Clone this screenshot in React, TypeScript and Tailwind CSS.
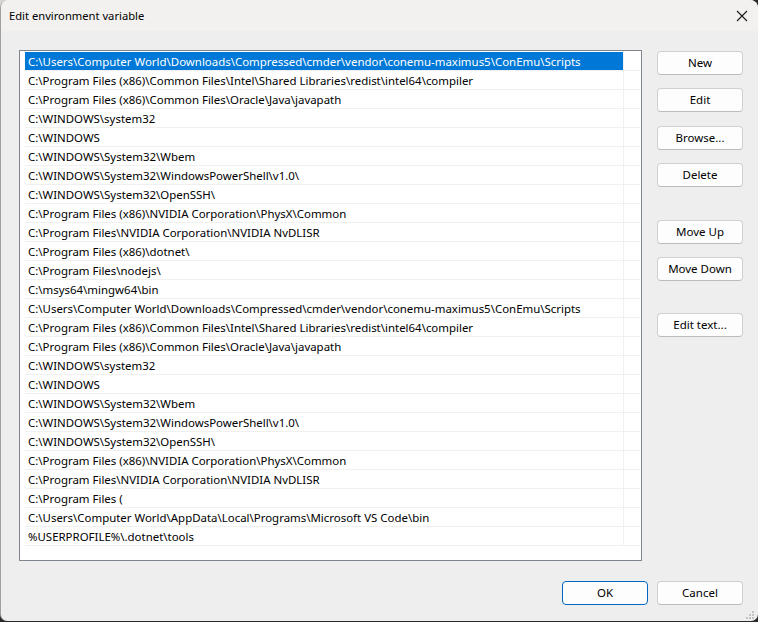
import React from 'react';

const paths = [
    "C:\\Users\\Computer World\\Downloads\\Compressed\\cmder\\vendor\\conemu-maximus5\\ConEmu\\Scripts",
    "C:\\Program Files (x86)\\Common Files\\Intel\\Shared Libraries\\redist\\intel64\\compiler",
    "C:\\Program Files (x86)\\Common Files\\Oracle\\Java\\javapath",
    "C:\\WINDOWS\\system32",
    "C:\\WINDOWS",
    "C:\\WINDOWS\\System32\\Wbem",
    "C:\\WINDOWS\\System32\\WindowsPowerShell\\v1.0\\",
    "C:\\WINDOWS\\System32\\OpenSSH\\",
    "C:\\Program Files (x86)\\NVIDIA Corporation\\PhysX\\Common",
    "C:\\Program Files\\NVIDIA Corporation\\NVIDIA NvDLISR",
    "C:\\Program Files (x86)\\dotnet\\",
    "C:\\Program Files\\nodejs\\",
    "C:\\msys64\\mingw64\\bin",
    "C:\\Users\\Computer World\\Downloads\\Compressed\\cmder\\vendor\\conemu-maximus5\\ConEmu\\Scripts",
    "C:\\Program Files (x86)\\Common Files\\Intel\\Shared Libraries\\redist\\intel64\\compiler",
    "C:\\Program Files (x86)\\Common Files\\Oracle\\Java\\javapath",
    "C:\\WINDOWS\\system32",
    "C:\\WINDOWS",
    "C:\\WINDOWS\\System32\\Wbem",
    "C:\\WINDOWS\\System32\\WindowsPowerShell\\v1.0\\",
    "C:\\WINDOWS\\System32\\OpenSSH\\",
    "C:\\Program Files (x86)\\NVIDIA Corporation\\PhysX\\Common",
    "C:\\Program Files\\NVIDIA Corporation\\NVIDIA NvDLISR",
    "C:\\Program Files (",
    "C:\\Users\\Computer World\\AppData\\Local\\Programs\\Microsoft VS Code\\bin",
    "%USERPROFILE%\\.dotnet\\tools",
];

function Btn({ label, primary, className = '' }: { label: string; primary?: boolean; className?: string }) {
    return (
        <button
            className={`w-[86px] h-[24px] rounded-[4px] bg-[#fdfdfd] text-[11.5px] leading-none text-black border ${
                primary ? 'border-[#0067c0]' : 'border-[#d0d0d0] border-b-[#bcbcbc]'
            } ${className}`}
        >
            {label}
        </button>
    );
}

export default function App() {
    return (
        <div className="relative w-[758px] h-[622px] bg-[radial-gradient(circle_at_top_left,#d8d5cf_40px,#2a2a2a_41px)] overflow-hidden font-['Noto_Sans','Open_Sans',sans-serif]">
            <div className="w-full h-[621px] rounded-t-[8px] rounded-b-[7px] bg-[#eeeeee] flex flex-col overflow-hidden border-l border-[#a0a0a0]">
                <div className="h-[31px] shrink-0 bg-[#f3f1ef] flex items-center justify-between pl-[8px] pr-[8px] pt-px">
                    <span className="text-[11.2px] text-black">Edit environment variable</span>
                    <svg width="12" height="12" viewBox="0 0 12 12" className="mr-[2px]">
                        <path d="M1 1 L11 11 M11 1 L1 11" stroke="#1a1a1a" strokeWidth="1.1" fill="none" />
                    </svg>
                </div>
                <div className="flex flex-1 pl-[18px] pt-[19px] pr-[15px]">
                    <div className="w-[623px] h-[511px] border border-[#7f858c] bg-white pl-[5px] pt-[1px] pr-px">
                        {paths.map((p, i) => (
                            <div key={i} className="flex h-[19px] w-full border-b border-[#f0f0f0]">
                                <div
                                    className={`w-[598px] h-[18px] pl-[3px] text-[11.45px] leading-[19px] whitespace-nowrap overflow-hidden ${
                                        i === 0 ? 'bg-[#0078d7] text-white' : 'text-black'
                                    }`}
                                >
                                    {p}
                                </div>
                                <div className="w-px h-[19px] bg-[#f0f0f0]" />
                            </div>
                        ))}
                    </div>
                    <div className="ml-auto flex flex-col pt-px">
                        <Btn label="New" />
                        <Btn label="Edit" className="mt-[13px]" />
                        <Btn label="Browse..." className="mt-[14px]" />
                        <Btn label="Delete" className="mt-[13px]" />
                        <Btn label="Move Up" className="mt-[33px]" />
                        <Btn label="Move Down" className="mt-[13px]" />
                        <Btn label="Edit text..." className="mt-[32px]" />
                    </div>
                </div>
                <div className="flex justify-end gap-[9px] pr-[15px] pb-[16px]">
                    <Btn label="OK" primary />
                    <Btn label="Cancel" />
                </div>
            </div>
            <svg width="9" height="9" viewBox="0 0 9 9" className="absolute right-[3px] bottom-[2px]" fill="#c4c4c4">
                <rect x="6" y="0" width="2" height="2" />
                <rect x="3" y="3" width="2" height="2" />
                <rect x="6" y="3" width="2" height="2" />
                <rect x="0" y="6" width="2" height="2" />
                <rect x="3" y="6" width="2" height="2" />
                <rect x="6" y="6" width="2" height="2" />
            </svg>
        </div>
    );
}
